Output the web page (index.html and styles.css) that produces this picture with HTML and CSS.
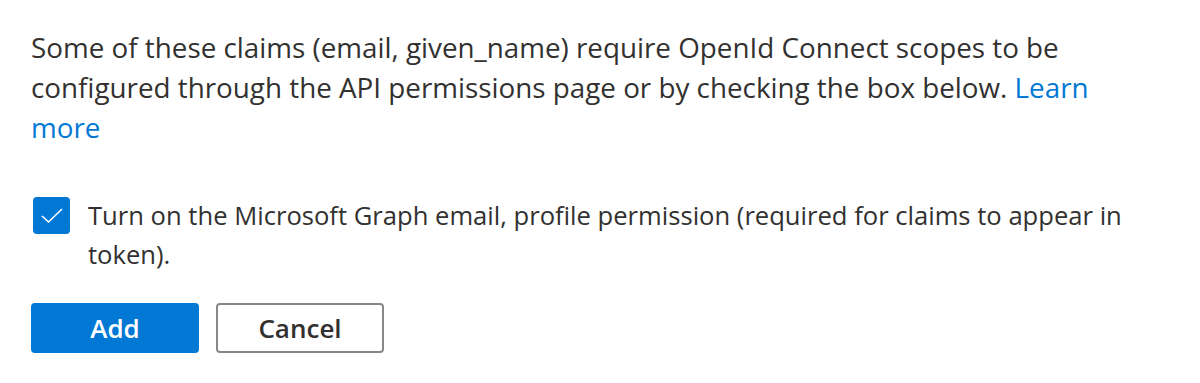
FILE: index.html
```html
<!DOCTYPE html>
<html>
<head>
    <title>Add claim</title>
    <link rel="stylesheet" href="styles.css">
</head>
<body>
    <div class="panel">
        <p class="notice">Some of these claims (email, given_name) require OpenId Connect scopes to be configured through the API permissions page or by checking the box below. <a href="#">Learn more</a></p>

        <label class="check-row">
            <span class="checkbox">
                <svg width="24" height="17" viewBox="0 0 24 17"><path d="M2 9 L8.5 15 L22 2" fill="none" stroke="#fff" stroke-width="1.6"/></svg>
            </span>
            <span class="check-label">Turn on the Microsoft Graph email, profile permission (required for claims to appear in token).</span>
        </label>

        <div class="actions">
            <button class="btn primary">Add</button>
            <button class="btn">Cancel</button>
        </div>
    </div>
</body>
</html>
```

FILE: styles.css
```css
body {
    margin: 0;
    background-color: #fff;
    color: #323130;
    font-family: "Open Sans", "Noto Sans", sans-serif;
}

.panel {
    padding: 27px 0 0 31px;
    width: 1110px;
}

.notice {
    margin: 0;
    font-size: 27.8px;
    line-height: 40px;
}

.notice a {
    color: #0078d4;
    text-decoration: none;
}

.check-row {
    display: flex;
    align-items: flex-start;
    gap: 18px;
    margin-top: 49px;
}

.checkbox {
    flex: none;
    width: 37px;
    height: 37px;
    margin-top: 1px;
    margin-left: 2px;
    border-radius: 4px;
    background-color: #0078d4;
    display: flex;
    align-items: center;
    justify-content: center;
}

.check-label {
    font-size: 25.6px;
    line-height: 39px;
}

.actions {
    display: flex;
    gap: 17px;
    margin-top: 29px;
}

.btn {
    width: 168px;
    height: 50px;
    border: 2px solid #8a8886;
    border-radius: 4px;
    background-color: #fff;
    color: #323130;
    font-family: "Open Sans", "Noto Sans", sans-serif;
    font-size: 26px;
    font-weight: 600;
    cursor: pointer;
}

.btn.primary {
    background-color: #0078d4;
    border-color: #0078d4;
    color: #fff;
}
```
